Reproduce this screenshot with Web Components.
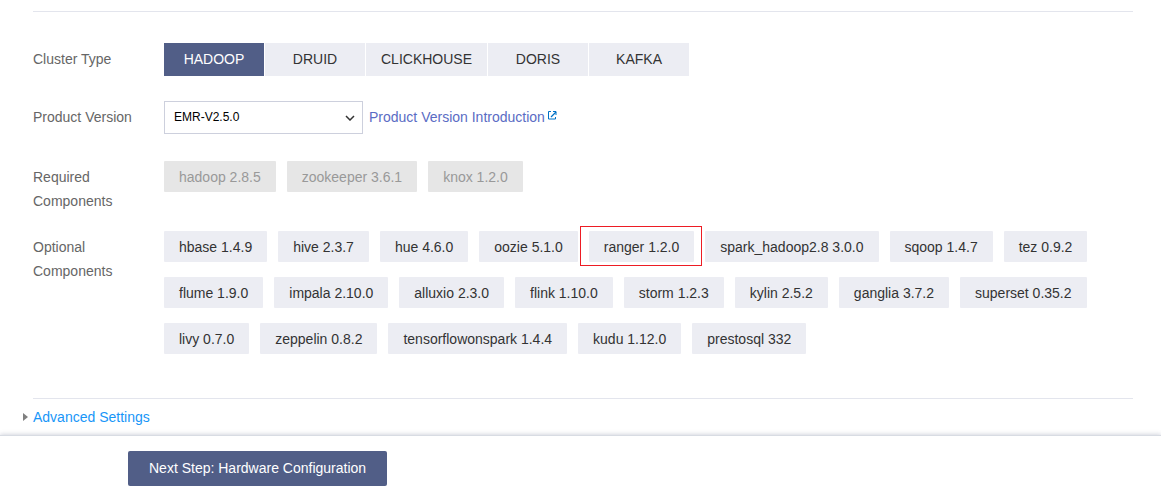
<!DOCTYPE html>
<html lang="en">
<head>
<meta charset="utf-8">
<meta name="viewport" content="width=device-width, initial-scale=1">
<title>EMR - Software Configuration</title>
<style>
    body {
        margin: 0;
        background: #ffffff;
        color: #666666;
        font: 14px/24px "Liberation Sans", Arial, sans-serif;
    }
</style>
</head>
<body>
<cluster-config></cluster-config>

<script>
// label on the left, controls on the right
class FormRow extends HTMLElement {
    constructor() {
        super()
        this.attachShadow({ mode: 'open' })
        this.shadowRoot.innerHTML = `
            <style>
                :host {
                    display: grid;
                    grid-template-columns: 104px minmax(0, 1fr);
                    column-gap: 27px;
                    align-items: start;
                }

                .label {
                    padding-top: 4px;
                }
            </style>
            <div class="label"><slot name="label"></slot></div>
            <slot></slot>
        `
    }
}

class ClusterTabs extends HTMLElement {
    constructor() {
        super()
        this.attachShadow({ mode: 'open' })
        this.shadowRoot.innerHTML = `
            <style>
                :host {
                    display: flex;
                    flex-wrap: wrap;
                    gap: 1px;
                }
            </style>
            <slot></slot>
        `
    }

    connectedCallback() {
        this.addEventListener('click', (e) => {
            const tab = e.target.closest('cluster-tab')
            if (!tab) return
            this.querySelectorAll('cluster-tab').forEach(t => t.toggleAttribute('selected', t === tab))
        })
    }
}

class ClusterTab extends HTMLElement {
    static observedAttributes = ['selected']

    constructor() {
        super()
        this.attachShadow({ mode: 'open' })
        this.shadowRoot.innerHTML = `
            <style>
                :host {
                    display: block;
                }

                button {
                    display: block;
                    min-width: 100px;
                    height: 33px;
                    padding: 0 15px 2px;
                    border: 0;
                    background: #ecedf3;
                    color: #333333;
                    font: inherit;
                    cursor: pointer;
                }

                :host([selected]) button {
                    background: #515e87;
                    color: #ffffff;
                }
            </style>
            <button type="button" aria-pressed="false"><slot></slot></button>
        `
    }

    attributeChangedCallback() {
        this.shadowRoot.querySelector('button').setAttribute('aria-pressed', this.hasAttribute('selected'))
    }
}

class VersionField extends HTMLElement {
    constructor() {
        super()
        this.attachShadow({ mode: 'open' })
        this.shadowRoot.innerHTML = `
            <style>
                :host {
                    display: block;
                }

                .field {
                    display: flex;
                    flex-wrap: wrap;
                    align-items: flex-start;
                    gap: 6px;
                }

                .select {
                    display: grid;
                    align-items: center;
                    width: 199px;
                }

                .select > * {
                    grid-area: 1 / 1;
                }

                select {
                    appearance: none;
                    width: 100%;
                    height: 33px;
                    padding: 0 24px 2px 9px;
                    border: 1px solid #cdd0dd;
                    border-radius: 0;
                    background: #ffffff;
                    color: #000000;
                    font: 12px "Liberation Sans", Arial, sans-serif;
                }

                .select svg {
                    justify-self: end;
                    margin-right: 8px;
                    pointer-events: none;
                }

                a {
                    display: flex;
                    gap: 3px;
                    padding-top: 4px;
                    color: #5a6cc4;
                    text-decoration: none;
                }

                a svg {
                    margin-top: 6px;
                }
            </style>
            <form-row>
                <label slot="label" for="version">Product Version</label>
                <div class="field">
                    <div class="select">
                        <select id="version">
                            <option>EMR-V2.5.0</option>
                        </select>
                        <svg width="10" height="6" viewBox="0 0 10 6" fill="none" stroke="#333333" stroke-width="1.5" aria-hidden="true">
                            <path d="M1 1l4 4 4-4"/>
                        </svg>
                    </div>
                    <a href="#">Product Version Introduction<svg width="9" height="9" viewBox="0 0 9 9" fill="none" stroke="#0072c6" aria-hidden="true">
                        <path d="M3 .5H.5v7.500h7V6M5 .5h3V4"/>
                        <path d="M3 6l5-5" stroke-width="1.300"/>
                    </svg></a>
                </div>
            </form-row>
        `
    }
}

class ChipList extends HTMLElement {
    constructor() {
        super()
        this.attachShadow({ mode: 'open' })
        this.shadowRoot.innerHTML = `
            <style>
                :host {
                    display: flex;
                    flex-wrap: wrap;
                    gap: 15px 11px;
                }
            </style>
            <slot></slot>
        `
    }
}

class ComponentChip extends HTMLElement {
    constructor() {
        super()
        this.attachShadow({ mode: 'open' })
        this.shadowRoot.innerHTML = `
            <style>
                :host {
                    display: block;
                    position: relative;
                }

                button {
                    display: block;
                    height: 31px;
                    padding: 0 15px;
                    border: 0;
                    border-radius: 1px;
                    background: #ecedf3;
                    color: #333333;
                    font: inherit;
                    cursor: pointer;
                }

                button:disabled {
                    background: #e6e6e6;
                    color: #999999;
                    cursor: default;
                }

                button[aria-pressed="true"] {
                    background: #515e87;
                    color: #ffffff;
                }

                /* callout frame round the chip */
                :host([highlight])::after {
                    content: "";
                    position: absolute;
                    inset: -5px -8px -4px -9px;
                    border: 1px solid #ed1c24;
                    pointer-events: none;
                }
            </style>
            <button type="button" aria-pressed="false"><slot></slot></button>
        `
    }

    connectedCallback() {
        const button = this.shadowRoot.querySelector('button')
        button.disabled = this.hasAttribute('disabled')
        button.onclick = () => {
            button.setAttribute('aria-pressed', button.getAttribute('aria-pressed') !== 'true')
        }
    }
}

class AdvancedSettings extends HTMLElement {
    constructor() {
        super()
        this.attachShadow({ mode: 'open' })
        this.shadowRoot.innerHTML = `
            <style>
                :host {
                    display: flex;
                    padding: 6px 23px;
                }

                a {
                    display: flex;
                    align-items: center;
                    gap: 5px;
                    color: #1896f8;
                    text-decoration: none;
                }
            </style>
            <a href="#"><svg width="5" height="8" viewBox="0 0 5 8" fill="#808080" aria-hidden="true"><path d="M0 0l5 4-5 4z"/></svg><slot></slot></a>
        `
    }
}

class StepFooter extends HTMLElement {
    constructor() {
        super()
        this.attachShadow({ mode: 'open' })
        this.shadowRoot.innerHTML = `
            <style>
                :host {
                    display: block;
                    padding: 15px 128px;
                    border-top: 1px solid #d8dce3;
                    background: #ffffff;
                    box-shadow: 0 -1px 4px rgba(90, 100, 130, 0.25);
                }

                button {
                    display: block;
                    height: 35px;
                    padding: 0 21px 2px;
                    border: 0;
                    border-radius: 2px;
                    background: #515e87;
                    color: #ffffff;
                    font: inherit;
                    cursor: pointer;
                }
            </style>
            <button type="button"><slot></slot></button>
        `
    }
}

class ClusterConfig extends HTMLElement {
    constructor() {
        super()
        this.attachShadow({ mode: 'open' })
        this.shadowRoot.innerHTML = `
            <style>
                :host {
                    display: block;
                }

                .form {
                    display: flex;
                    flex-direction: column;
                    margin: 11px 28px 0 33px;
                    padding: 31px 0 44px;
                    border: solid #e3e5ed;
                    border-width: 1px 0;
                }

                .type {
                    margin-bottom: 25px;
                }

                .version {
                    margin-bottom: 27px;
                }

                .required {
                    margin-bottom: 18px;
                }
            </style>
            <main>
                <div class="form">
                    <form-row class="type">
                        <span slot="label">Cluster Type</span>
                        <cluster-tabs>
                            <cluster-tab selected>HADOOP</cluster-tab>
                            <cluster-tab>DRUID</cluster-tab>
                            <cluster-tab>CLICKHOUSE</cluster-tab>
                            <cluster-tab>DORIS</cluster-tab>
                            <cluster-tab>KAFKA</cluster-tab>
                        </cluster-tabs>
                    </form-row>
                    <version-field class="version"></version-field>
                    <form-row class="required">
                        <span slot="label">Required Components</span>
                        <chip-list>
                            <component-chip disabled>hadoop 2.8.5</component-chip>
                            <component-chip disabled>zookeeper 3.6.1</component-chip>
                            <component-chip disabled>knox 1.2.0</component-chip>
                        </chip-list>
                    </form-row>
                    <form-row>
                        <span slot="label">Optional Components</span>
                        <chip-list>
                            <component-chip>hbase 1.4.9</component-chip>
                            <component-chip>hive 2.3.7</component-chip>
                            <component-chip>hue 4.6.0</component-chip>
                            <component-chip>oozie 5.1.0</component-chip>
                            <component-chip highlight>ranger 1.2.0</component-chip>
                            <component-chip>spark_hadoop2.8 3.0.0</component-chip>
                            <component-chip>sqoop 1.4.7</component-chip>
                            <component-chip>tez 0.9.2</component-chip>
                            <component-chip>flume 1.9.0</component-chip>
                            <component-chip>impala 2.10.0</component-chip>
                            <component-chip>alluxio 2.3.0</component-chip>
                            <component-chip>flink 1.10.0</component-chip>
                            <component-chip>storm 1.2.3</component-chip>
                            <component-chip>kylin 2.5.2</component-chip>
                            <component-chip>ganglia 3.7.2</component-chip>
                            <component-chip>superset 0.35.2</component-chip>
                            <component-chip>livy 0.7.0</component-chip>
                            <component-chip>zeppelin 0.8.2</component-chip>
                            <component-chip>tensorflowonspark 1.4.4</component-chip>
                            <component-chip>kudu 1.12.0</component-chip>
                            <component-chip>prestosql 332</component-chip>
                        </chip-list>
                    </form-row>
                </div>
                <advanced-settings>Advanced Settings</advanced-settings>
            </main>
            <step-footer>Next Step: Hardware Configuration</step-footer>
        `
    }
}

customElements.define('form-row', FormRow)
customElements.define('cluster-tabs', ClusterTabs)
customElements.define('cluster-tab', ClusterTab)
customElements.define('version-field', VersionField)
customElements.define('chip-list', ChipList)
customElements.define('component-chip', ComponentChip)
customElements.define('advanced-settings', AdvancedSettings)
customElements.define('step-footer', StepFooter)
customElements.define('cluster-config', ClusterConfig)
</script>
</body>
</html>
